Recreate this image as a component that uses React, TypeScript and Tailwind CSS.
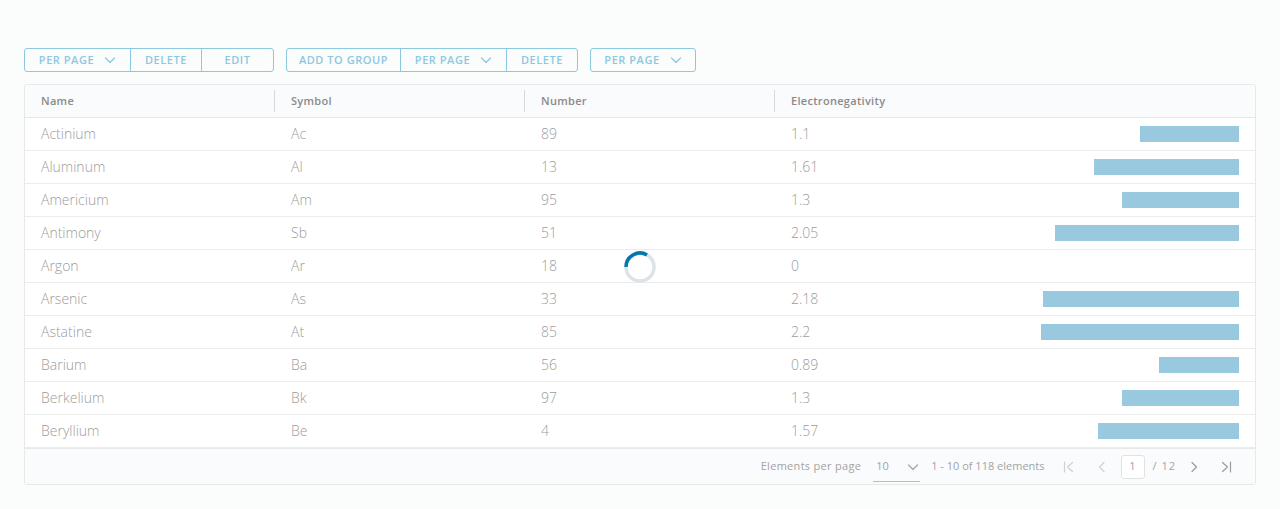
import React from "react";

type Element = { name: string; symbol: string; number: number; en: number };

const rows: Element[] = [
  { name: "Actinium", symbol: "Ac", number: 89, en: 1.1 },
  { name: "Aluminum", symbol: "Al", number: 13, en: 1.61 },
  { name: "Americium", symbol: "Am", number: 95, en: 1.3 },
  { name: "Antimony", symbol: "Sb", number: 51, en: 2.05 },
  { name: "Argon", symbol: "Ar", number: 18, en: 0 },
  { name: "Arsenic", symbol: "As", number: 33, en: 2.18 },
  { name: "Astatine", symbol: "At", number: 85, en: 2.2 },
  { name: "Barium", symbol: "Ba", number: 56, en: 0.89 },
  { name: "Berkelium", symbol: "Bk", number: 97, en: 1.3 },
  { name: "Beryllium", symbol: "Be", number: 4, en: 1.57 },
];

function Chevron({ className = "" }: { className?: string }) {
  return (
    <svg className={className} width="12" height="12" viewBox="0 0 12 12" fill="none" stroke="currentColor" strokeWidth={1.3}>
      <path d="M1.5 4l4.5 4.5L10.5 4" strokeLinecap="round" strokeLinejoin="round" />
    </svg>
  );
}

function Seg({ label, dropdown, w, last }: { label: string; dropdown?: boolean; w: string; last?: boolean }) {
  return (
    <div
      className={`${w} h-full flex items-center justify-center gap-[10px] ${last ? "" : "border-r border-[#8cc8e0]"}`}
    >
      <span>{label}</span>
      {dropdown && <Chevron />}
    </div>
  );
}

function Group({ children }: { children: React.ReactNode }) {
  return (
    <div className="flex h-6 items-center rounded-[3px] border border-[#8cc8e0] text-[11px] font-semibold tracking-[0.55px] text-[#8cc8e0]">
      {children}
    </div>
  );
}

export default function App() {
  const cell = "w-[250px] shrink-0 pl-4";
  return (
    <div
      className="w-[1280px] h-[509px] bg-[#fbfcfc] pt-12 px-6 text-[#999]"
      style={{ fontFamily: "'Open Sans', Lato, sans-serif" }}
    >
      <div className="flex gap-3">
        <Group>
          <Seg label="PER PAGE" dropdown w="w-[106px]" />
          <Seg label="DELETE" w="w-[71px]" />
          <Seg label="EDIT" w="w-[71px]" last />
        </Group>
        <Group>
          <Seg label="ADD TO GROUP" w="w-[114px]" />
          <Seg label="PER PAGE" dropdown w="w-[106px]" />
          <Seg label="DELETE" w="w-[70px]" last />
        </Group>
        <Group>
          <Seg label="PER PAGE" dropdown w="w-[104px]" last />
        </Group>
      </div>

      <div className="relative mt-3 w-[1232px] rounded-[3px] border border-[#e8e8e8] bg-white overflow-hidden">
        <div className="flex h-[33px] items-center bg-[#fafbfc] border-b border-[#e8e8e8] text-[11px] font-semibold tracking-[0.3px] text-[#8a8a8a]">
          {["Name", "Symbol", "Number"].map((h) => (
            <div key={h} className={`${cell} h-full flex items-center relative`}>
              {h}
              <span className="absolute right-0 top-[5px] bottom-[5px] w-px bg-[#d8d8d8]" />
            </div>
          ))}
          <div className="flex-1 pl-4">Electronegativity</div>
        </div>
        {rows.map((r) => (
          <div key={r.name} className="flex h-[33px] items-center border-b border-[#ececec] text-sm font-light text-[#9c9c9c]">
            <div className={cell}>{r.name}</div>
            <div className={cell}>{r.symbol}</div>
            <div className={cell}>{r.number}</div>
            <div className="flex-1 pl-4 pr-4 flex items-center justify-between">
              <span>{r.en}</span>
              <div className="h-4 bg-[#99c9df]" style={{ width: `${Math.round(r.en * 90)}px` }} />
            </div>
          </div>
        ))}
        <div className="flex h-[36px] items-center justify-end bg-[#fafbfc] border-t border-[#e8e8e8] pr-[22px] text-[11px] text-[#a3a3a3]">
          <span className="tracking-[0.3px]">Elements per page</span>
          <div className="ml-3 flex h-[30px] w-[47px] items-center justify-between border-b border-[#bbb] pl-[3px] pr-[1px] pt-[1px]">
            <span>10</span>
            <Chevron className="text-[#a8a8a8]" />
          </div>
          <span className="ml-[11px]">1 - 10 of 118 elements</span>
          <svg className="ml-[17px]" width="14" height="14" viewBox="0 0 14 14" fill="none" stroke="#d0d0d0" strokeWidth={1.2}>
            <path d="M2.5 2v10M10.5 2.5L5.5 7l5 4.5" strokeLinecap="round" strokeLinejoin="round" />
          </svg>
          <svg className="ml-[19px]" width="14" height="14" viewBox="0 0 14 14" fill="none" stroke="#d0d0d0" strokeWidth={1.2}>
            <path d="M9 2.5L4.5 7 9 11.5" strokeLinecap="round" strokeLinejoin="round" />
          </svg>
          <div className="ml-[12px] flex h-6 w-6 items-center justify-center rounded-[3px] border border-[#e2e2e2] bg-white text-[#a3a3a3]">
            1
          </div>
          <span className="ml-2 tracking-[1px]">/ 12</span>
          <svg className="ml-[11px]" width="14" height="14" viewBox="0 0 14 14" fill="none" stroke="#9a9a9a" strokeWidth={1.2}>
            <path d="M5 2.5L9.5 7 5 11.5" strokeLinecap="round" strokeLinejoin="round" />
          </svg>
          <svg className="ml-[18px]" width="14" height="14" viewBox="0 0 14 14" fill="none" stroke="#9a9a9a" strokeWidth={1.2}>
            <path d="M11.5 2v10M3.5 2.5L8.5 7l-5 4.5" strokeLinecap="round" strokeLinejoin="round" />
          </svg>
        </div>

        {/* loading spinner */}
        <div className="absolute left-[599px] top-[166px] h-8 w-8">
          <svg width="32" height="32" viewBox="0 0 32 32">
            <circle cx="16" cy="16" r="14" fill="none" stroke="#dde4e8" strokeWidth="3.5" />
            <path d="M2 16A14 14 0 0 1 23 3.9" fill="none" stroke="#0079ad" strokeWidth="3.5" />
          </svg>
        </div>
      </div>
    </div>
  );
}
